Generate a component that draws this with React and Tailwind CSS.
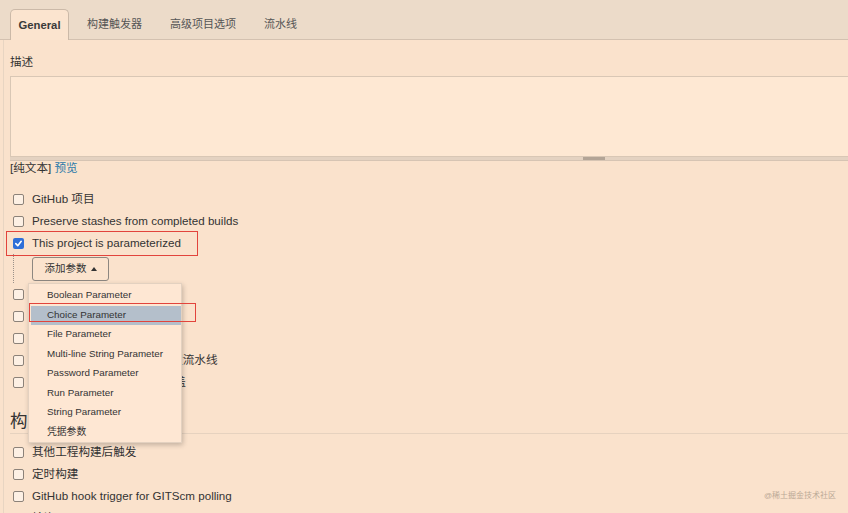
import React from "react";

const font = { fontFamily: '"Liberation Sans", "Noto Sans CJK SC", sans-serif' };

function Box({ checked }) {
    if (checked) {
        return (
            <span className="w-[11px] h-[11px] rounded-[2px] bg-[#2f6fd8] flex items-center justify-center shrink-0">
                <svg width="9" height="9" viewBox="0 0 10 10">
                    <path d="M2 5.2 L4.2 7.4 L8 2.6" stroke="white" strokeWidth="1.8" fill="none" strokeLinecap="round" strokeLinejoin="round" />
                </svg>
            </span>
        );
    }
    return <span className="w-[11px] h-[11px] rounded-[2px] border border-[#8c8279] bg-[#fdf0e4] shrink-0" />;
}

function Row({ label, checked }) {
    return (
        <div className="h-[22px] flex items-center pl-[9px] gap-[8px] text-[11.6px] text-[#333]">
            <Box checked={checked} />
            <span className="whitespace-nowrap">{label}</span>
        </div>
    );
}

const params = [
    "Boolean Parameter",
    "Choice Parameter",
    "File Parameter",
    "Multi-line String Parameter",
    "Password Parameter",
    "Run Parameter",
    "String Parameter",
    "凭据参数",
];

export default function App() {
    return (
        <div className="relative w-[848px] h-[513px] overflow-hidden bg-[#fae2cc]" style={font}>
            {/* tab bar */}
            <div className="h-[40px] bg-[#ecdbc9] border-b border-[#d3c1b0] flex items-end pl-[10px]">
                <div className="h-[31px] w-[59px] -mb-px rounded-t-[5px] border border-b-0 border-[#cbb9a8] bg-[#fbe4cf] flex items-center justify-center text-[11.3px] font-bold text-[#3a3a3a]">
                    General
                </div>
                <div className="h-[30px] flex items-center text-[11px] text-[#555] ml-[18px] gap-[28px]">
                    <span>构建触发器</span>
                    <span>高级项目选项</span>
                    <span>流水线</span>
                </div>
            </div>

            <div className="ml-[3px] border-l border-[#e8d5c2] h-full">
                <div className="pl-[6px] pt-[14px] text-[11.6px] leading-[16px] text-[#333]">描述</div>
                <div className="ml-[6px] mt-[6px] w-[860px]">
                    <div className="h-[81px] bg-[#fee8d3] border border-[#d9c7b5]" />
                    <div className="h-[4px] bg-[#e4d2c1] border-b border-[#d6c4b3] flex">
                        <div className="ml-[573px] w-[22px] h-[3px] bg-[#b3a496]" />
                    </div>
                </div>
                <div className="pl-[6px] text-[11.6px] leading-[14px] text-[#333]">
                    [纯文本] <span className="text-[#2b79a9]">预览</span>
                </div>

                <div className="mt-[13px]">
                    <Row label="GitHub 项目" />
                    <Row label="Preserve stashes from completed builds" />
                    <Row label="This project is parameterized" checked />
                    <div className="h-[29px] ml-[9px] pl-[18px] border-l border-dotted border-[#9a9189] flex items-start pt-[3px]">
                        <button className="h-[24px] w-[77px] rounded-[3px] border border-[#8d8780] bg-[#fbe3cd] text-[10.5px] text-[#333] flex items-center justify-center gap-[4px]">
                            添加参数
                            <svg width="6" height="4" viewBox="0 0 6 4"><path d="M0 4 L3 0 L6 4 Z" fill="#333" /></svg>
                        </button>
                    </div>
                    <Row label="Throttle builds" />
                    <Row label="丢弃旧的构建" />
                    <Row label="不允许并发构建" />
                    <Row label="控制器重启后不允许重新配置流水线" />
                    <Row label="流水线效率/持久保存设置覆盖" />
                </div>

                <div className="mt-[16px] ml-[6px] leading-[24px] text-[17.5px] text-[#333] border-b border-[#e6d2bf]">
                    构建触发器
                </div>

                <div className="mt-[7px]">
                    <Row label="其他工程构建后触发" />
                    <Row label="定时构建" />
                    <Row label="GitHub hook trigger for GITScm polling" />
                    <Row label="轮询 SCM" />
                </div>
            </div>

            {/* annotation boxes */}
            <div className="absolute left-[6px] top-[231px] w-[192px] h-[25px] border border-[#e2443c]" />

            {/* dropdown menu */}
            <div className="absolute left-[28px] top-[283px] w-[154px] h-[160px] py-[2px] bg-[#fee7d3] border border-[#e3d1c0] shadow-[1px_2px_5px_rgba(0,0,0,0.22)]">
                {params.map((p, i) => (
                    <div
                        key={p}
                        className={
                            "h-[19.5px] flex items-center pl-[16px] ml-[2px] text-[9.8px] text-[#333] " +
                            (i === 1 ? "bg-[#b4bfcb]" : "")
                        }
                    >
                        {p}
                    </div>
                ))}
            </div>
            <div className="absolute left-[29px] top-[303px] w-[167px] h-[19px] border border-[#e2443c]" />

            <div className="absolute right-[12px] top-[490px] text-[8px] text-[#bba996]">@稀土掘金技术社区</div>
        </div>
    );
}
